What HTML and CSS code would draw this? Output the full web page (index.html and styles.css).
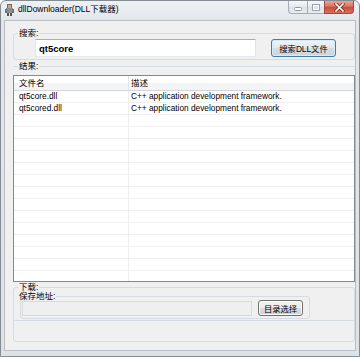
FILE: index.html
```html
<!DOCTYPE html>
<html lang="zh-CN">
<head>
    <meta charset="UTF-8">
    <title>dllDownloader(DLL下载器)</title>
    <link rel="stylesheet" href="styles.css">
</head>
<body>
    <div class="window">
        <div class="titlebar">
            <svg class="app-icon" width="9" height="12" viewBox="0 0 9 12">
                <rect x="2" y="0" width="5" height="4" fill="#7b6a5c"/>
                <rect x="3" y="1" width="3" height="3" fill="#c9a58c"/>
                <rect x="1" y="4" width="7" height="5" fill="#8c8f94"/>
                <rect x="0" y="5" width="2" height="4" fill="#6f7378"/>
                <rect x="7" y="5" width="2" height="4" fill="#6f7378"/>
                <rect x="2" y="9" width="2" height="3" fill="#5d5148"/>
                <rect x="5" y="9" width="2" height="3" fill="#5d5148"/>
            </svg>
            <span class="title">dllDownloader(DLL下载器)</span>
            <div class="caption-buttons">
                <span class="cap cap-min">
                    <svg width="8" height="4" viewBox="0 0 8 4"><rect x="0.5" y="0.5" width="7" height="3" rx="1" fill="#fff" stroke="#8d96a3"/></svg>
                </span>
                <span class="cap cap-max">
                    <svg width="8" height="7" viewBox="0 0 8 7"><rect x="0.5" y="0.5" width="7" height="6" fill="none" stroke="#9aa2ad"/><rect x="1.5" y="1.5" width="5" height="4" fill="none" stroke="#fff"/></svg>
                </span>
                <span class="cap cap-close">
                    <svg width="11" height="9" viewBox="0 0 11 9">
                        <path d="M2 1 L9 8 M9 1 L2 8" stroke="#8b3323" stroke-width="3.2" stroke-linecap="square"/>
                        <path d="M2 1 L9 8 M9 1 L2 8" stroke="#fff" stroke-width="1.6" stroke-linecap="square"/>
                    </svg>
                </span>
            </div>
        </div>

        <div class="client">
            <fieldset class="group group-search">
                <legend>搜索:</legend>
                <div class="search-row">
                    <input class="text-input search-input" type="text" value="qt5core">
                    <button class="btn btn-default">搜索DLL文件</button>
                </div>
            </fieldset>

            <fieldset class="group group-results">
                <legend>结果:</legend>
                <div class="table">
                    <div class="thead">
                        <div class="cell col-name">文件名</div>
                        <div class="cell col-desc">描述</div>
                    </div>
                    <div class="tbody">
                        <div class="row">
                            <div class="cell col-name">qt5core.dll</div>
                            <div class="cell col-desc">C++ application development framework.</div>
                        </div>
                        <div class="row">
                            <div class="cell col-name">qt5cored.dll</div>
                            <div class="cell col-desc">C++ application development framework.</div>
                        </div>
                    </div>
                </div>
            </fieldset>

            <fieldset class="group group-download">
                <legend>下载:</legend>
                <div class="download-body">
                    <fieldset class="group group-path">
                        <legend>保存地址:</legend>
                        <div class="path-row">
                            <input class="text-input path-input" type="text" disabled>
                            <button class="btn btn-dir">目录选择</button>
                        </div>
                    </fieldset>
                </div>
                <div class="download-extra"></div>
            </fieldset>
        </div>
    </div>
</body>
</html>
```

FILE: styles.css
```css
body {
    margin: 0;
    width: 360px;
    height: 357px;
    overflow: hidden;
    background: #fff;
    font-family: "Liberation Sans", "Noto Sans CJK SC", sans-serif;
    font-size: 8.3px;
    color: #000;
}
.window {
    box-sizing: border-box;
    width: 360px;
    height: 357px;
    border: 1px solid #858b93;
    border-radius: 6px 6px 0 0;
    background: linear-gradient(#eef1f4, #e2e6ea 20px, #dde2e7);
    display: flex;
    flex-direction: column;
}
.titlebar {
    height: 19px;
    display: flex;
    align-items: flex-start;
    flex-shrink: 0;
}
.app-icon {
    margin: 3px 0 0 4px;
}
.title {
    margin: 3px 0 0 4px;
    font-size: 8.5px;
    line-height: 11px;
}
.caption-buttons {
    margin-left: auto;
    margin-right: 5px;
    display: flex;
    height: 13px;
}
.cap {
    box-sizing: border-box;
    height: 13px;
    display: flex;
    align-items: center;
    justify-content: center;
    border: 1px solid #a3abb5;
    border-top: 0;
}
.cap-min {
    width: 19px;
    border-radius: 0 0 0 4px;
    border-right: 0;
    background: linear-gradient(#f5f7f9, #e8ebef 45%, #dce1e6 50%, #e9edf1);
}
.cap-min svg {
    margin-top: 4px;
}
.cap-max {
    width: 17px;
    border-right: 0;
    background: linear-gradient(#f5f7f9, #e8ebef 45%, #dce1e6 50%, #e9edf1);
}
.cap-close {
    width: 30px;
    border-color: #a5473a;
    border-radius: 0 0 4px 0;
    background: linear-gradient(#eaa597, #d9735e 45%, #c9493a 50%, #d8725a);
}
.client {
    box-sizing: border-box;
    height: 331px;
    margin: 0 3px;
    border: 1px solid #b9bec5;
    background: #f0f0f0;
    padding: 7px 0 0 8px;
}
.group {
    margin: 0;
    padding: 0;
    min-width: 0;
    border: 1px solid #d5dbe0;
    border-radius: 3px;
}
.group legend {
    padding: 0 1px;
    margin-left: 4px;
    font-size: 8.5px;
    line-height: 10px;
}
.search-row {
    display: flex;
    padding: 1px 0 2px 21px;
}
.text-input {
    box-sizing: border-box;
    margin: 0;
    padding: 0 3px;
    font-family: "Liberation Sans", "Noto Sans CJK SC", sans-serif;
    outline: none;
}
.search-input {
    width: 221px;
    height: 18px;
    border: 1px solid #e2e3ea;
    border-top-color: #abadb3;
    border-bottom-color: #e3e9ef;
    background: #fff;
    font-size: 9.5px;
    font-weight: bold;
    color: #000;
}
.btn {
    box-sizing: border-box;
    margin: 0;
    padding: 0;
    border: 1px solid #707070;
    border-radius: 3px;
    background: linear-gradient(#f2f2f2, #ebebeb 50%, #dddddd 50%, #cfcfcf);
    box-shadow: inset 0 0 0 1px #fbfbfb;
    font-family: "Liberation Sans", "Noto Sans CJK SC", sans-serif;
    font-size: 8.3px;
    color: #000;
}
.btn-default {
    width: 65px;
    height: 18px;
    margin-left: 15px;
    border-color: #3c7fb1;
    background: linear-gradient(#f1f4f6, #e4e8ec 50%, #d6dce2 50%, #cdd4da);
    box-shadow: inset 0 0 0 1px #d3ecfb;
}
.group-results {
    margin-top: 1px;
    border-width: 1px 0 0 0;
    border-radius: 0;
}
.group-results legend {
    margin-left: 5px;
}
.table {
    box-sizing: border-box;
    height: 207px;
    margin-top: 4px;
    border: 1px solid #828790;
    background: #fff;
    overflow: hidden;
}
.thead {
    display: flex;
    height: 14px;
    border-bottom: 1px solid #d5d5d5;
    background: linear-gradient(#fff 50%, #f3f4f6 50%);
}
.thead .cell {
    line-height: 14px;
    font-size: 8.5px;
}
.thead .col-name {
    border-right: 1px solid #e3e5e8;
}
.tbody {
    height: 200px;
    background:
        linear-gradient(to right, transparent 114px, #eeeeee 114px, #eeeeee 115px, transparent 115px),
        repeating-linear-gradient(to bottom, transparent 0, transparent 11px, #f0f0f0 11px, #f0f0f0 12px);
}
.row {
    display: flex;
    height: 12px;
}
.row .cell {
    line-height: 11px;
}
.cell {
    white-space: nowrap;
}
.col-name {
    box-sizing: border-box;
    width: 115px;
    padding-left: 5px;
}
.col-desc {
    padding-left: 2px;
}
.download-body {
    padding-left: 6px;
}
.group-path {
    width: 290px;
    box-sizing: border-box;
}
.group-path legend {
    margin-left: -3px;
    line-height: 9px;
}
.path-row {
    display: flex;
    align-items: flex-end;
    height: 16px;
    margin-top: -1px;
    padding: 0 6px 2px 1px;
}
.path-input {
    width: 230px;
    height: 15px;
    border: 1px solid #d9d9d9;
    background: #efefef;
}
.btn-dir {
    width: 45px;
    height: 16px;
    margin-left: 6px;
}
.download-extra {
    height: 20px;
    margin-top: 1px;
    border-top: 1px solid #d5dbe0;
}
```
